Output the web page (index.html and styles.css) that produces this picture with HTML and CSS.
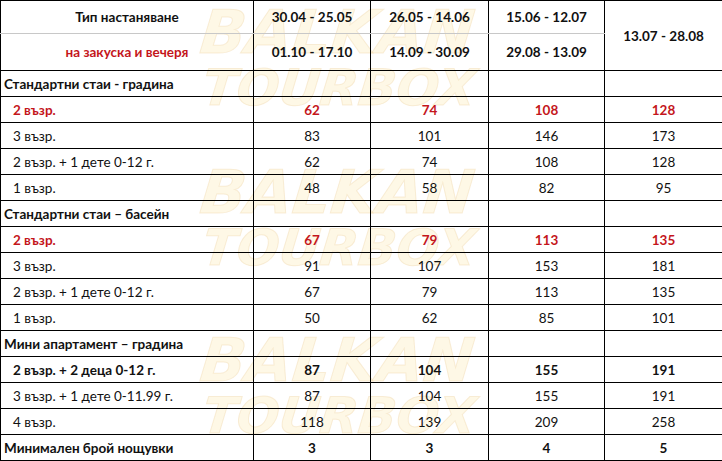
FILE: index.html
```html
<!DOCTYPE html>
<html lang="bg">
<head>
<meta charset="utf-8">
<link rel="stylesheet" href="styles.css">
</head>
<body>
<div class="wrap">
  <div class="wm wm1"><div>BALKAN</div><div>TOURBOX</div></div>
  <div class="wm wm2"><div>BALKAN</div><div>TOURBOX</div></div>
  <div class="wm wm3"><div>BALKAN</div><div>TOURBOX</div></div>
  <table class="prices">
    <colgroup>
      <col class="c1"><col class="c2"><col class="c3"><col class="c4"><col class="c5">
    </colgroup>
    <tr class="h1">
      <td class="b center">Тип настаняване</td>
      <td class="b center">30.04 - 25.05</td>
      <td class="b center">26.05 - 14.06</td>
      <td class="b center">15.06 - 12.07</td>
      <td class="b center" rowspan="2">13.07 - 28.08</td>
    </tr>
    <tr class="h2">
      <td class="b center red">на закуска и вечеря</td>
      <td class="b center">01.10 - 17.10</td>
      <td class="b center">14.09 - 30.09</td>
      <td class="b center">29.08 - 13.09</td>
    </tr>
    <tr class="row"><td class="b cat">Стандартни стаи - градина</td><td></td><td></td><td></td><td></td></tr>
    <tr class="row red b"><td class="sub">2 възр.</td><td>62</td><td>74</td><td>108</td><td>128</td></tr>
    <tr class="row"><td class="sub">3 възр.</td><td>83</td><td>101</td><td>146</td><td>173</td></tr>
    <tr class="row"><td class="sub">2 възр. + 1 дете 0-12 г.</td><td>62</td><td>74</td><td>108</td><td>128</td></tr>
    <tr class="row"><td class="sub">1 възр.</td><td>48</td><td>58</td><td>82</td><td>95</td></tr>
    <tr class="row"><td class="b cat">Стандартни стаи – басейн</td><td></td><td></td><td></td><td></td></tr>
    <tr class="row red b"><td class="sub">2 възр.</td><td>67</td><td>79</td><td>113</td><td>135</td></tr>
    <tr class="row"><td class="sub">3 възр.</td><td>91</td><td>107</td><td>153</td><td>181</td></tr>
    <tr class="row"><td class="sub">2 възр. + 1 дете 0-12 г.</td><td>67</td><td>79</td><td>113</td><td>135</td></tr>
    <tr class="row"><td class="sub">1 възр.</td><td>50</td><td>62</td><td>85</td><td>101</td></tr>
    <tr class="row"><td class="b cat">Мини апартамент – градина</td><td></td><td></td><td></td><td></td></tr>
    <tr class="row b"><td class="sub">2 възр. + 2 деца 0-12 г.</td><td>87</td><td>104</td><td>155</td><td>191</td></tr>
    <tr class="row"><td class="sub">3 възр. + 1 дете 0-11.99 г.</td><td>87</td><td>104</td><td>155</td><td>191</td></tr>
    <tr class="row"><td class="sub">4 възр.</td><td>118</td><td>139</td><td>209</td><td>258</td></tr>
    <tr class="row b"><td class="cat">Минимален брой нощувки</td><td>3</td><td>3</td><td>4</td><td>5</td></tr>
  </table>
</div>
</body>
</html>
```
FILE: styles.css
```css
html, body {
  margin: 0;
  padding: 0;
  background: #ffffff;
}
.wrap {
  position: relative;
  width: 722px;
  height: 461px;
  overflow: hidden;
}
.wm {
  position: absolute;
  left: 198px;
  z-index: 0;
  font-family: "DejaVu Sans", "Liberation Sans", sans-serif;
  font-weight: bold;
  font-style: italic;
  font-size: 60px;
  line-height: 60px;
  color: rgba(253, 242, 205, 0.5);
  -webkit-text-stroke: 1px rgba(240, 215, 170, 0.4);
  transform: skewX(-6deg);
}
.wm div + div {
  font-size: 50px;
  line-height: 52px;
  margin-left: 8px;
}
.wm1 { top: 2px; }
.wm2 { top: 162px; }
.wm3 { top: 330px; }
.prices {
  position: relative;
  z-index: 1;
  border-collapse: collapse;
  table-layout: fixed;
  width: 722px;
  font-family: Lato, "Open Sans", sans-serif;
  font-size: 13.5px;
  color: #111111;
}
.c1 { width: 253px; }
.c2 { width: 117px; }
.c3 { width: 118px; }
.c4 { width: 116px; }
.c5 { width: 118px; }
.prices td {
  border: 1px solid #000000;
  padding: 0;
  text-align: center;
  vertical-align: middle;
  white-space: nowrap;
}
.prices tr.h1 td { height: 32px; border-bottom-color: #c8c8c8; }
.prices tr.h1 td[rowspan] { border-bottom-color: #000000; }
.prices tr.h2 td { height: 36px; }
.prices tr.row td { height: 25px; }
.prices td.cat { text-align: left; padding-left: 3px; }
.prices td.sub { text-align: left; padding-left: 12px; }
.b { font-weight: bold; }
.red { color: #c4161c; }
```
